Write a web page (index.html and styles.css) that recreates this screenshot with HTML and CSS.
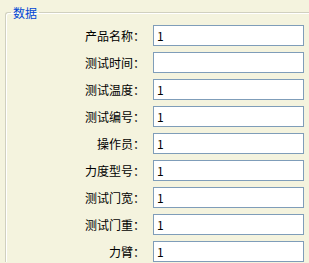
FILE: index.html
```html
<!DOCTYPE html>
<html>
<head>
<meta charset="utf-8">
<link rel="stylesheet" href="styles.css">
</head>
<body>
<fieldset class="group">
  <legend class="group-title">数据</legend>
  <div class="form">
    <label class="lbl">产品名称：</label><input class="field" value="1">
    <label class="lbl">测试时间：</label><input class="field" value="">
    <label class="lbl">测试温度：</label><input class="field" value="1">
    <label class="lbl">测试编号：</label><input class="field" value="1">
    <label class="lbl">操作员：</label><input class="field" value="1">
    <label class="lbl">力度型号：</label><input class="field" value="1">
    <label class="lbl">测试门宽：</label><input class="field" value="1">
    <label class="lbl">测试门重：</label><input class="field" value="1">
    <label class="lbl">力臂：</label><input class="field" value="1">
  </div>
</fieldset>
</body>
</html>
```
FILE: styles.css
```css
html, body {
  margin: 0;
  padding: 0;
  background: #f4f3de;
  overflow: hidden;
  width: 309px;
  height: 263px;
}
body {
  font-family: "Noto Sans CJK SC", "DejaVu Sans", sans-serif;
  font-size: 12px;
  color: #000;
}
.group {
  margin: 5px 0 0 5px;
  padding: 5px 0 0 0;
  width: 304px;
  border: 1px solid #d0d0bf;
  border-right: none;
  border-bottom: none;
  border-top-left-radius: 3px;
  box-shadow: inset 1px 1px 0 #ffffff;
  box-sizing: border-box;
}
.group-title {
  margin-left: 5px;
  padding: 0 2px;
  font-size: 12px;
  line-height: 15px;
  height: 15px;
  color: #0046d5;
}
.form {
  display: grid;
  grid-template-columns: 139px 151px;
  column-gap: 8px;
  row-gap: 6px;
  align-items: center;
}
.lbl {
  text-align: right;
  line-height: 21px;
  white-space: nowrap;
}
.field {
  box-sizing: border-box;
  width: 151px;
  height: 21px;
  margin: 0;
  padding: 0 3px;
  border: 1px solid #7f9db9;
  background: #fff;
  font-family: "Noto Sans CJK SC", "DejaVu Sans", sans-serif;
  font-size: 12px;
  color: #000;
  outline: none;
}
```
